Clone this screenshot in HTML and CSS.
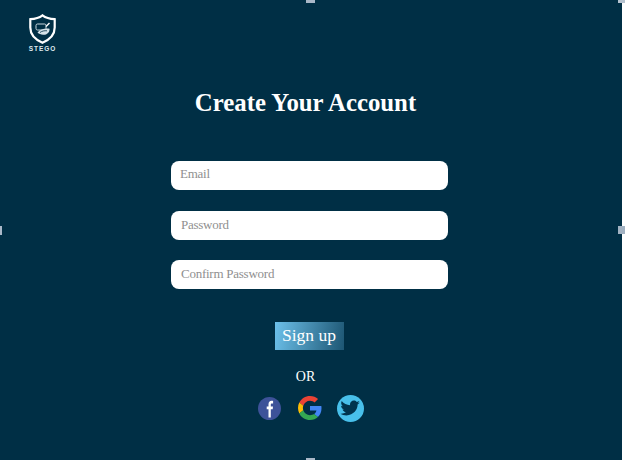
FILE: index.html
```html
<!DOCTYPE html>
<html lang="en">
<head>
  <meta charset="UTF-8">
  <meta name="viewport" content="width=device-width, initial-scale=1.0">
  <title>Stego - Sign up</title>
  <link rel="stylesheet" href="styles.css">
</head>
<body>

<div class="page">
  <span class="handle handle-top"></span>
  <span class="handle handle-left"></span>
  <span class="handle handle-right"></span>
  <span class="handle handle-bottom"></span>
  <span class="handle handle-corner"></span>

  <div class="logo">
    <svg width="27" height="30" viewBox="0 0 27 30" fill="none">
      <path d="M13.500 1.300C16.500 3.600 20.500 4.900 25.700 5.200V13.500C25.700 20.800 20.500 25.700 13.500 28.700C6.500 25.700 1.300 20.800 1.300 13.500V5.200C6.500 4.900 10.500 3.600 13.500 1.300Z" stroke="#fff" stroke-width="2.200"/>
      <rect x="7" y="10" width="10" height="6" rx="1.500" stroke="#c9d8df" stroke-width="1"/>
      <path d="M8.500 18.500C11 15 16.500 14 20.500 14.700C20.800 18.200 18 21 14 20.800C11.800 20.600 10 19.800 8.500 18.500Z" fill="#d5e2e8"/>
      <path d="M11 18.500C13 17 15.500 16.500 18 16.800" stroke="#002f45" stroke-width="0.800"/>
      <path d="M17 12.500L20.500 9" stroke="#fff" stroke-width="1.400"/>
    </svg>
    <span class="logo-name">STEGO</span>
  </div>

  <h1>Create Your Account</h1>

  <form class="signup">
    <input class="email" type="email" placeholder="Email">
    <input type="password" placeholder="Password">
    <input class="confirm" type="password" placeholder="Confirm Password">
    <button type="button">Sign up</button>
  </form>

  <p class="or">OR</p>

  <div class="social">
    <svg class="facebook" width="23" height="23" viewBox="0 0 23 23">
      <circle cx="11.500" cy="11.500" r="11.500" fill="#3d5299"/>
      <path d="M12.800 20.500V12.300H14.700L15 9.600H12.800V7.900C12.800 7 13.100 6.500 14 6.500H15.100V3.900C14.700 3.800 14.200 3.800 13.500 3.800C11.700 3.800 10.500 5 10.500 7.300V9.600H8.700V12.300H10.500V20.500Z" fill="#fff"/>
    </svg>
    <svg width="24" height="24" viewBox="0 0 48 48">
      <path fill="#ea4335" d="M24 9.500c3.900 0 6.900 1.500 9.200 3.600l6.900-6.900C35.900 2.400 30.500 0 24 0 14.600 0 6.500 5.400 2.600 13.200l8 6.200C12.500 13.600 17.800 9.500 24 9.500z"/>
      <path fill="#4285f4" d="M47 24.500c0-1.600-.1-3.100-.4-4.500H24v9h12.900c-.6 3-2.300 5.500-4.800 7.200l7.700 6C44.300 38 47 31.800 47 24.500z"/>
      <path fill="#fbbc05" d="M10.600 28.600c-.5-1.400-.8-3-.8-4.600s.3-3.200.8-4.600l-8-6.200C.9 16.500 0 20.100 0 24s.9 7.500 2.600 10.800z"/>
      <path fill="#34a853" d="M24 48c6.500 0 11.900-2.100 15.800-5.800l-7.700-6c-2.100 1.400-4.900 2.300-8.100 2.300-6.200 0-11.500-4.100-13.400-9.900l-8 6.200C6.500 42.600 14.600 48 24 48z"/>
    </svg>
    <svg class="twitter" width="27" height="27" viewBox="0 0 27 27">
      <circle cx="13.500" cy="13.500" r="13.500" fill="#48c0ea"/>
      <path d="M23 7.500C22.200 7.900 21.400 8.100 20.600 8.200C21.500 7.600 22.100 6.800 22.400 5.900C21.600 6.400 20.700 6.700 19.800 6.900C18.200 5.200 15.600 5.200 14.100 6.700C13.100 7.700 12.800 9 13.100 10.200C9.800 10.100 6.700 8.500 4.700 6C3.700 7.800 4.200 10 5.900 11.200C5.300 11.200 4.700 11 4.100 10.700C4.100 12.500 5.500 14.100 7.200 14.400C6.600 14.600 6 14.600 5.500 14.500C6 16 7.400 17.100 9 17.100C7.400 18.300 5.500 18.900 3.500 18.700C5.200 19.800 7.200 20.400 9.400 20.400C16.600 20.400 20.800 14.200 20.600 9.600C21.500 9 22.300 8.300 23 7.500Z" fill="#00344d"/>
    </svg>
  </div>
</div>

</body>
</html>
```

FILE: styles.css
```css
html { background: #fff; }
body { margin: 0; width: 625px; height: 460px; background: #fff; font-family: "Liberation Serif", "Times New Roman", serif; }
.page { position: relative; box-sizing: border-box; width: 622px; height: 460px; padding: 14px 0 0; background: #002f45; color: #fff; overflow: visible; }

.logo { display: flex; flex-direction: column; align-items: center; width: 27px; margin-left: 29px; }
.logo svg { display: block; }
.logo-name { margin-top: 1px; font-family: "Liberation Sans", Arial, sans-serif; font-size: 6.500px; font-weight: bold; line-height: 7px; letter-spacing: 1px; color: #dfe9ee; white-space: nowrap; }

h1 { margin: 35px 0 0; text-align: center; font-size: 24.800px; line-height: 31px; font-weight: bold; width: 611px; }

.signup { display: flex; flex-direction: column; align-items: center; margin-top: 43px; margin-left: 171px; width: 277px; }
.signup input { box-sizing: border-box; width: 277px; height: 29px; margin-bottom: 20.500px; padding: 0 10px; background: #fff; border: none; border-radius: 8px; font-family: inherit; font-size: 13px; letter-spacing: -0.250px; color: #333; }
.signup input.email { padding: 0 0 3px 9px; }
.signup input.confirm { padding-bottom: 1px; }
.signup input::placeholder { color: #8f8f8f; opacity: 1; }
.signup button { width: 69px; height: 28px; margin-top: 12px; margin-right: 1px; padding: 0; border: none; background: linear-gradient(100deg, #6cc0ea, #1d5673); color: #fff; font-family: inherit; font-size: 17.500px; cursor: pointer; }

.or { margin: 19px 0 0; width: 611px; text-align: center; font-size: 14px; line-height: 16px; }

.social { display: flex; align-items: center; gap: 16px; margin: 10px 0 0 258px; }
.social svg { display: block; }
.social .facebook { margin-right: 1px; }
.social .twitter { margin-left: -1px; }

.handle { position: absolute; background: #a9b8c8; }
.handle-top { top: 0; left: 306px; width: 9px; height: 3px; }
.handle-bottom { bottom: 0; left: 306px; width: 9px; height: 2px; }
.handle-left { top: 226px; left: 0; width: 2px; height: 9px; }
.handle-right { top: 226px; right: -3px; width: 7px; height: 8px; background: #a2b2c2; }
.handle-corner { top: 0; right: -3px; width: 7px; height: 3px; background: #b5c2cf; }
```
